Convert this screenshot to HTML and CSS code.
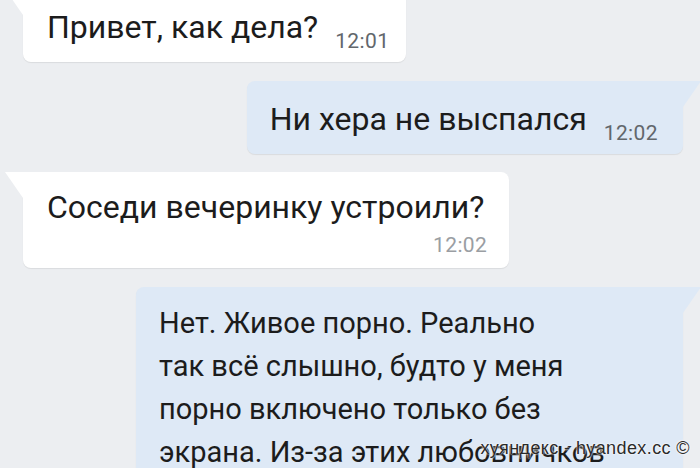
FILE: index.html
```
<!DOCTYPE HTML>
<html>
	<head>
		<meta charset="utf-8">
		<title>Сообщения</title>
		<link rel="stylesheet" href="styles.css">
	</head>
	<body>
		<div class="chat">
			<div class="row in first">
				<div class="bubble">
					<span class="text">Привет, как дела?</span>
					<span class="time">12:01</span>
				</div>
			</div>
			<div class="row out">
				<div class="bubble">
					<span class="text">Ни хера не выспался</span>
					<span class="time">12:02</span>
				</div>
			</div>
			<div class="row in">
				<div class="bubble stacked">
					<div class="text">Соседи вечеринку устроили?</div>
					<div class="time">12:02</div>
				</div>
			</div>
			<div class="row out">
				<div class="bubble long">
					<div class="text">Нет. Живое порно. Реально<br>так всё слышно, будто у меня<br>порно включено только без<br>экрана. Из-за этих любовничков</div>
				</div>
			</div>
		</div>
		<div class="watermark">хуяндекс - hyandex.cc ©</div>
	</body>
</html>
```

FILE: styles.css
```
html, body
{
	margin: 0;
	height: 100%;
	overflow: hidden;
}
body
{
	background-color: #eceef1;
	font-family: Roboto, "Noto Sans", sans-serif;
	color: #1c1c1c;
	position: relative;
}
div.chat
{
	display: flex;
	flex-direction: column;
	gap: 18px;
}
div.row
{
	display: flex;
	padding: 0 17px 0 23px;
}
div.row.in
{
	justify-content: flex-start;
}
div.row.out
{
	justify-content: flex-end;
	margin-top: 1px;
}
div.row.first
{
	margin-top: -11px;
}
div.bubble
{
	position: relative;
	background-color: #ffffff;
	border-radius: 8px;
	padding: 20px 17px 17px 24px;
	box-shadow: 0 1px 1px rgba(0, 0, 0, 0.08);
	font-size: 32px;
	line-height: 36px;
}
div.row.out div.bubble
{
	background-color: #dee9f6;
	padding-right: 25px;
	padding-left: 23px;
}
div.row.in div.bubble
{
	border-top-left-radius: 0;
}
div.row.out div.bubble
{
	border-top-right-radius: 0;
}
div.row.in div.bubble::before
{
	content: "";
	position: absolute;
	left: -18px;
	top: 0;
	width: 18px;
	height: 26px;
	background-color: #ffffff;
	clip-path: polygon(0 0, 100% 0, 100% 100%);
}
div.row.out div.bubble::after
{
	content: "";
	position: absolute;
	right: -18px;
	top: 0;
	width: 18px;
	height: 26px;
	background-color: #dee9f6;
	clip-path: polygon(0 0, 100% 0, 0 100%);
}
span.time
{
	font-size: 21px;
	line-height: 0;
	letter-spacing: 0.4px;
	color: #62676c;
	margin-left: 9px;
	vertical-align: -10px;
}
div.bubble.stacked
{
	padding-top: 17px;
	padding-right: 25px;
	padding-bottom: 13px;
}
div.stacked div.time
{
	font-size: 21px;
	line-height: 20px;
	letter-spacing: 0.4px;
	color: #9a9ea3;
	text-align: right;
	margin-top: 10px;
	margin-right: -3px;
}
div.bubble.long
{
	width: 547px;
	box-sizing: border-box;
	font-size: 29px;
	line-height: 43px;
	padding-top: 15px;
	padding-left: 24px;
}
div.watermark
{
	position: absolute;
	right: 10px;
	bottom: 9px;
	font-size: 18px;
	letter-spacing: 0.4px;
	color: #2a2a2a;
	font-family: "Liberation Sans", Arial, sans-serif;
	text-shadow: 0 0 2px #ffffff, 0 0 2px #ffffff;
}
```
